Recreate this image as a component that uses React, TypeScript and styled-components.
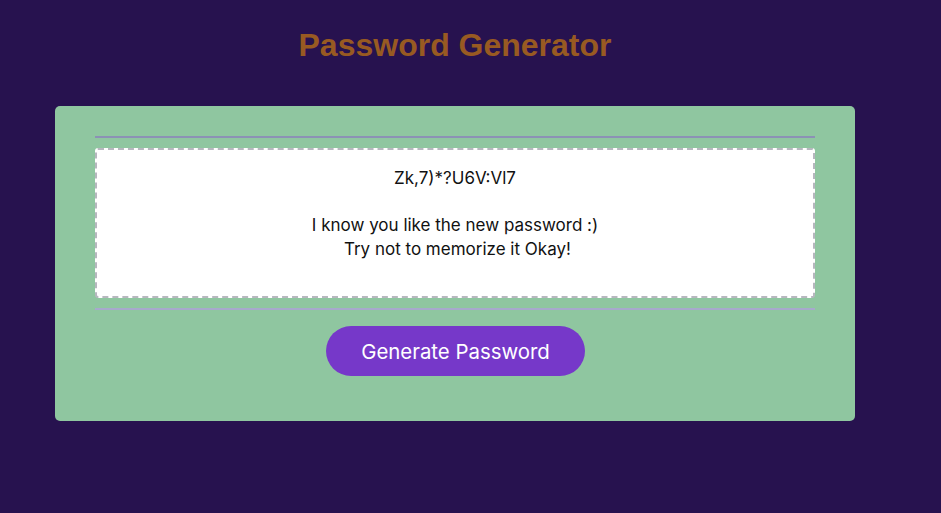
import React from 'react'
import styled, { createGlobalStyle } from 'styled-components'

const GlobalStyle = createGlobalStyle`
  html, body {
    margin: 0;
    padding: 0;
    background: #27124f;
  }
  body {
    font-family: Inter, 'Noto Sans', sans-serif;
  }
`

const Page = styled.div`
  width: 910px;
  min-height: 513px;
  display: flex;
  flex-direction: column;
  align-items: center;
`

const Title = styled.h1`
  margin: 27px 0 0;
  height: 36px;
  font-family: 'Liberation Sans', Arial, sans-serif;
  font-size: 32px;
  line-height: 36px;
  font-weight: 700;
  color: #985a22;
`

const Card = styled.div`
  margin-top: 43px;
  width: 800px;
  box-sizing: border-box;
  padding: 30px 40px 45px;
  background: #8fc6a0;
  border-radius: 5px;
  display: flex;
  flex-direction: column;
  align-items: center;
`

const Rule = styled.div<{ $tone: string }>`
  align-self: stretch;
  height: 2px;
  background: ${p => p.$tone};
`

const Output = styled.div`
  align-self: stretch;
  margin: 10px 0;
  height: 150px;
  box-sizing: border-box;
  padding: 17px 10px;
  background: #fff;
  border: 2px dashed #b7b7bf;
  border-radius: 3px;
  color: #111;
  font-size: 17px;
  line-height: 23.5px;
  text-align: center;
  white-space: pre-wrap;
`

const Button = styled.button`
  margin: 16px 0 0 1px;
  width: 259px;
  height: 50px;
  border: none;
  border-radius: 25px;
  background: #7638c9;
  color: #fff;
  font-family: Inter, 'Noto Sans', sans-serif;
  font-size: 20.4px;
  cursor: pointer;
`

const password = 'Zk,7)*?U6V:Vl7'

export default function App() {
  return (
    <>
      <GlobalStyle />
      <Page>
        <Title>Password Generator</Title>
        <Card>
          <Rule $tone="#8c91b5" />
          <Output>
            {`${password}\n\nI know you like the new password :)\n Try not to memorize it Okay!`}
          </Output>
          <Rule $tone="#a7a9cd" />
          <Button>Generate Password</Button>
        </Card>
      </Page>
    </>
  )
}
